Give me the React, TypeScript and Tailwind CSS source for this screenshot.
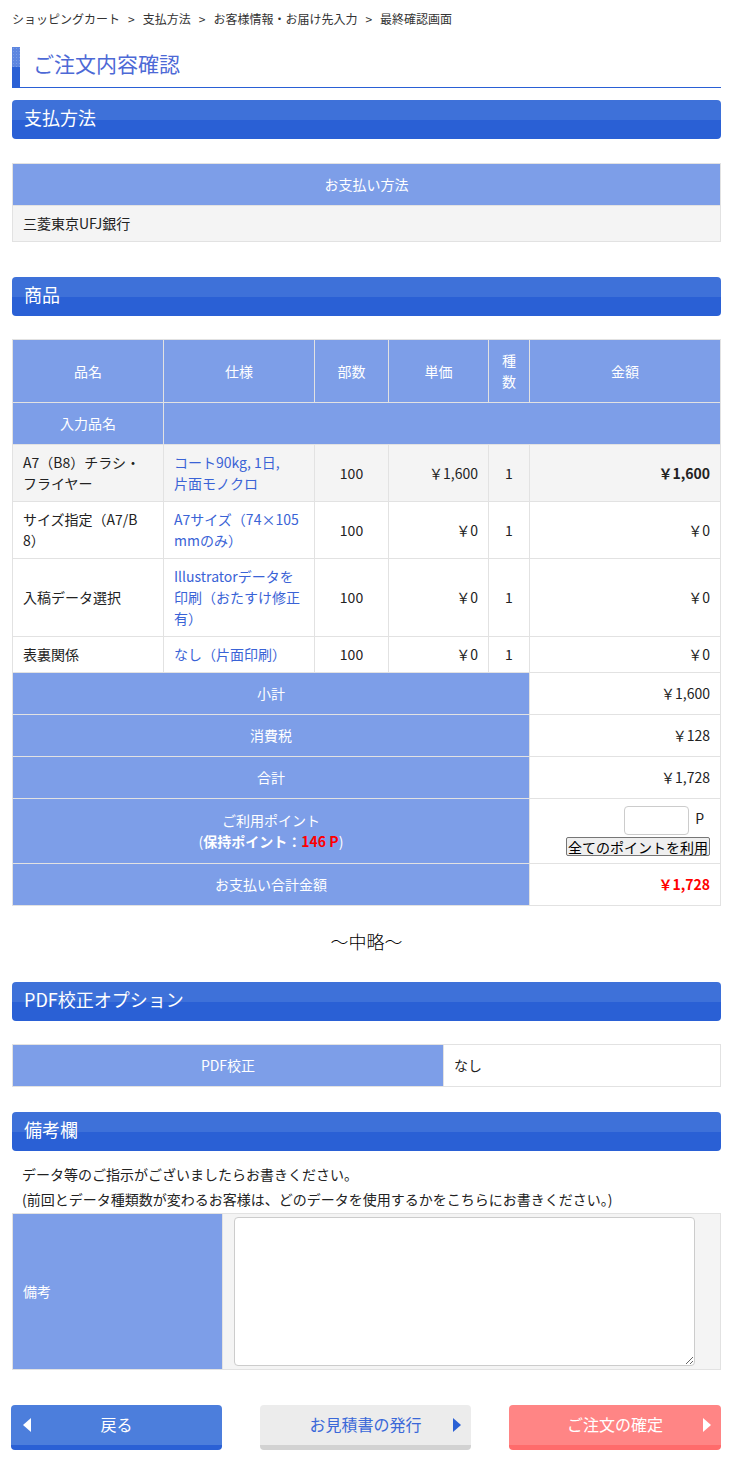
import React from "react";

const FONT = { fontFamily: '"Noto Sans CJK JP", "Noto Sans", sans-serif' };

function SectionHeader({ title }: { title: string }) {
  return (
    <div className="h-[39px] rounded-[4px] bg-[linear-gradient(to_bottom,#3e71d9_0,#3e71d9_20px,#2a60d5_20px,#2a60d5_100%)] flex items-center pl-[12px] pb-[5px] text-white text-[18px] leading-[24px]">
      {title}
    </div>
  );
}

const th =
  "bg-[#7d9ee8] text-white font-normal text-[14px] leading-[21px] py-[10px] px-[10px] border border-[#e2e2e2] text-center";
const td = "text-[14px] leading-[21px] py-[7px] px-[10px] border border-[#e2e2e2]";

type Row = {
  name: string[];
  spec: string[];
  qty: string;
  unit: string;
  kinds: string;
  amount: string;
  bg: string;
  bold?: boolean;
};

const rows: Row[] = [
  { name: ["A7（B8）チラシ・", "フライヤー"], spec: ["コート90kg, 1日,", "片面モノクロ"], qty: "100", unit: "￥1,600", kinds: "1", amount: "￥1,600", bg: "bg-[#f4f4f4]", bold: true },
  { name: ["サイズ指定（A7/B", "8）"], spec: ["A7サイズ（74×105", "mmのみ）"], qty: "100", unit: "￥0", kinds: "1", amount: "￥0", bg: "bg-white" },
  { name: ["入稿データ選択"], spec: ["Illustratorデータを", "印刷（おたすけ修正", "有）"], qty: "100", unit: "￥0", kinds: "1", amount: "￥0", bg: "bg-white" },
  { name: ["表裏関係"], spec: ["なし（片面印刷）"], qty: "100", unit: "￥0", kinds: "1", amount: "￥0", bg: "bg-white" },
];

function Lines({ lines }: { lines: string[] }) {
  return (
    <>
      {lines.map((l, i) => (
        <div key={i} className="whitespace-nowrap">
          {l}
        </div>
      ))}
    </>
  );
}

function Triangle({ dir, color }: { dir: "left" | "right"; color: string }) {
  return (
    <svg width="9" height="14" viewBox="0 0 9 14" className="block">
      {dir === "left" ? (
        <polygon points="8,0 8,14 0,7" fill={color} />
      ) : (
        <polygon points="1,0 1,14 9,7" fill={color} />
      )}
    </svg>
  );
}

export default function App() {
  return (
    <div className="w-[736px] bg-white pl-[12px] pr-[15px] pb-[21px] text-[#222]" style={FONT}>
      {/* breadcrumb */}
      <div className="h-[47px] pt-[11px] text-[12px] leading-[16px] text-[#333]">
        <span>ショッピングカート</span>
        <span className="mx-[8px]">&gt;</span>
        <span>支払方法</span>
        <span className="mx-[8px]">&gt;</span>
        <span>お客様情報・お届け先入力</span>
        <span className="mx-[8px]">&gt;</span>
        <span>最終確認画面</span>
      </div>

      {/* title */}
      <div className="h-[41px] flex border-b border-[#2a60d5]">
        <div className="w-[8px] flex flex-col">
          <div className="h-[20px] bg-[#5d86e0] bg-[radial-gradient(#7b9de6_1px,transparent_1px)] bg-[length:3px_3px]" />
          <div className="flex-1 bg-[#2a60d5]" />
        </div>
        <div className="flex items-center pl-[13px] pb-[8px] text-[21px] leading-[28px] text-[#4d69d6]">
          ご注文内容確認
        </div>
      </div>

      <div className="mt-[12px]">
        <SectionHeader title="支払方法" />
      </div>

      <table className="mt-[24px] w-full border-collapse border border-[#e2e2e2]">
        <tbody>
          <tr>
            <th className={th}>お支払い方法</th>
          </tr>
          <tr>
            <td className={`${td} bg-[#f4f4f4] py-[6px]`}>三菱東京UFJ銀行</td>
          </tr>
        </tbody>
      </table>

      <div className="mt-[35px]">
        <SectionHeader title="商品" />
      </div>

      <table className="mt-[23px] w-full table-fixed border-collapse border border-[#e2e2e2]">
        <colgroup>
          <col className="w-[151px]" />
          <col className="w-[151px]" />
          <col className="w-[74px]" />
          <col className="w-[100px]" />
          <col className="w-[41px]" />
          <col />
        </colgroup>
        <tbody>
          <tr>
            <th className={th}>品名</th>
            <th className={th}>仕様</th>
            <th className={th}>部数</th>
            <th className={th}>単価</th>
            <th className={th}>種数</th>
            <th className={th}>金額</th>
          </tr>
          <tr>
            <th className={th}>入力品名</th>
            <th className={th} colSpan={5}></th>
          </tr>
          {rows.map((r, i) => (
            <tr key={i} className={r.bg}>
              <td className={td}>
                <Lines lines={r.name} />
              </td>
              <td className={`${td} text-[#3a63d6]`}>
                <Lines lines={r.spec} />
              </td>
              <td className={`${td} text-center`}>{r.qty}</td>
              <td className={`${td} text-right`}>{r.unit}</td>
              <td className={`${td} text-center px-0`}>{r.kinds}</td>
              <td className={`${td} text-right ${r.bold ? "font-bold" : ""}`}>{r.amount}</td>
            </tr>
          ))}
          <tr>
            <th className={th} colSpan={5}>小計</th>
            <td className={`${td} text-right py-[10px]`}>￥1,600</td>
          </tr>
          <tr>
            <th className={th} colSpan={5}>消費税</th>
            <td className={`${td} text-right py-[10px]`}>￥128</td>
          </tr>
          <tr>
            <th className={th} colSpan={5}>合計</th>
            <td className={`${td} text-right py-[10px]`}>￥1,728</td>
          </tr>
          <tr>
            <th className={`${th} py-[10px]`} colSpan={5}>
              <div>ご利用ポイント</div>
              <div>
                (<span className="font-bold">保持ポイント：</span>
                <span className="font-bold text-[#ff0000]">146 P</span>)
              </div>
            </th>
            <td className={`${td} py-[6px]`}>
              <div className="flex flex-col items-end">
                <div className="flex items-start">
                  <div className="w-[65px] h-[29px] rounded-[4px] border border-[#cccccc] bg-white" />
                  <span className="ml-[6px] mr-[6px] mt-[2px] text-[14px] leading-[20px]">P</span>
                </div>
                <button className="mt-[2px] h-[19px] px-[1px] border border-[#767676] bg-[#efefef] text-[14px] leading-[16px] text-black rounded-[2px]">
                  全てのポイントを利用
                </button>
              </div>
            </td>
          </tr>
          <tr>
            <th className={th} colSpan={5}>お支払い合計金額</th>
            <td className={`${td} text-right py-[10px] font-bold text-[#ff0000]`}>￥1,728</td>
          </tr>
        </tbody>
      </table>

      <div className="h-[76px] flex items-center justify-center pb-[6px] text-[18px] leading-[24px] font-light text-black">
        ～中略～
      </div>

      <SectionHeader title="PDF校正オプション" />

      <table className="mt-[23px] w-full table-fixed border-collapse border border-[#e2e2e2]">
        <colgroup>
          <col className="w-[431px]" />
          <col />
        </colgroup>
        <tbody>
          <tr>
            <th className={th}>PDF校正</th>
            <td className={`${td} py-[10px] bg-white`}>なし</td>
          </tr>
        </tbody>
      </table>

      <div className="mt-[25px]">
        <SectionHeader title="備考欄" />
      </div>

      <div className="pt-[11px] pl-[10px] text-[14px] leading-[25px]">
        <div>データ等のご指示がございましたらお書きください。</div>
        <div>(前回とデータ種類数が変わるお客様は、どのデータを使用するかをこちらにお書きください。)</div>
      </div>

      <table className="mt-[1px] w-full table-fixed border-collapse border border-[#e2e2e2]">
        <colgroup>
          <col className="w-[210px]" />
          <col />
        </colgroup>
        <tbody>
          <tr>
            <th className={`${th} text-left`}>備考</th>
            <td className="bg-[#f4f4f4] border border-[#e2e2e2] pl-[11px] pt-[3px] pb-[3px]">
              <textarea className="block w-[461px] h-[149px] rounded-[4px] border border-[#cccccc] bg-white resize-y" />
            </td>
          </tr>
        </tbody>
      </table>

      <div className="mt-[35px] flex justify-between -ml-px">
        <button className="relative w-[211px] h-[45px] rounded-[4px] bg-[#4c7edc] border-b-[5px] border-[#2a60d5] text-white text-[16px] leading-[22px] flex items-center justify-center pb-[2px]">
          <span className="absolute left-[12px] top-1/2 -translate-y-1/2">
            <Triangle dir="left" color="#ffffff" />
          </span>
          戻る
        </button>
        <button className="relative w-[211px] h-[45px] rounded-[4px] bg-[#ececec] border-b-[5px] border-[#d2d2d2] text-[#3a68d8] text-[16px] leading-[22px] flex items-center justify-center pb-[2px]">
          お見積書の発行
          <span className="absolute right-[10px] top-1/2 -translate-y-1/2">
            <Triangle dir="right" color="#2a60d5" />
          </span>
        </button>
        <button className="relative w-[212px] h-[45px] rounded-[4px] bg-[#ff8585] border-b-[5px] border-[#ff6b6b] text-white text-[16px] leading-[22px] flex items-center justify-center pb-[2px]">
          ご注文の確定
          <span className="absolute right-[10px] top-1/2 -translate-y-1/2">
            <Triangle dir="right" color="#ffffff" />
          </span>
        </button>
      </div>
    </div>
  );
}
